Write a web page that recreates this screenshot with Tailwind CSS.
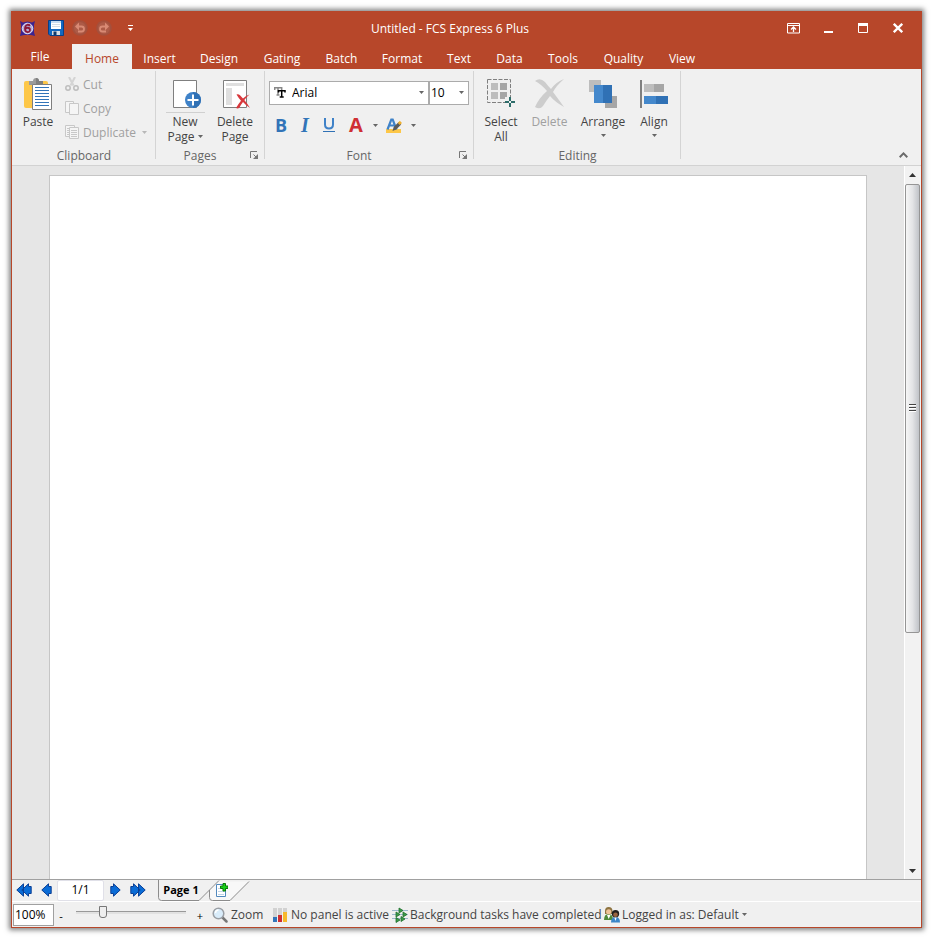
<!DOCTYPE html>
<html lang="en">
<head>
<meta charset="utf-8">
<meta name="viewport" content="width=device-width, initial-scale=1">
<title>Untitled - FCS Express 6 Plus</title>
<script src="https://cdn.jsdelivr.net/npm/@tailwindcss/browser@4"></script>
</head>
<body class="h-screen bg-white px-[11px] pt-[11px] pb-[10px] font-['Open_Sans','Noto_Sans',sans-serif] text-[12px] leading-[15px] text-[#444]">
<svg class="hidden">
  <symbol id="caret" viewBox="0 0 5 3"><path d="M0 0h5L2.500 3z" fill="currentColor"/></symbol>
  <symbol id="launcher" viewBox="0 0 9 9"><path d="M.5 7V.5H7" fill="none" stroke="#777"/><path d="M3.500 3.500 6 6" stroke="#777"/><path d="M8 3v5H3z" fill="#777"/></symbol>
  <symbol id="prev" viewBox="0 0 11 14"><path d="M.8 7 7.500.8V3.500H10.200V10.500H7.500V13.200z" fill="#0a6cd6" stroke="#0b3f94"/></symbol>
</svg>

<div class="flex h-full flex-col border border-[#b7472a] bg-[#f0f0f0] shadow-[0_0_5px_2px_rgba(0,0,0,0.5)]">

  <header class="bg-[#b7472a] text-white">
    <div class="flex h-8 items-center">
      <div class="flex w-32 items-center pl-2">
        <svg class="size-[15px]" viewBox="0 0 15 15"><path d="M0 0 3 1.500 7.500.5 12 1.500 15 0 14 4v7l1 4-4-1H4l-4 1 1-4V4z" fill="#3b2390"/><circle cx="7.500" cy="7.500" r="5.300" fill="#b5add8" stroke="#e4e1f5"/><path d="M10 4.800C8.500 3 5 3.500 5 7.800s5 4 5 1.200-4-3-4.800-.6" fill="none" stroke="#8a1838" stroke-width="1.800"/></svg>
        <button class="ml-[13px]" aria-label="Save"><svg class="block size-4" viewBox="0 0 16 16"><path d="M.5.500h15v15H2L.5 14z" fill="#1368c0" stroke="#0b3f86"/><path d="M3 1h10v8H3z" fill="#fff"/><path d="M3 1h10v2H3z" fill="#c7dcf0"/><path d="M4 4.500h8M4 6.500h8" stroke="#d5dde5"/><path d="M4 11h8v4H4z" fill="#d7dde3"/><path d="M5.500 11.500h3v3.500h-3z" fill="#113a6c"/></svg></button>
        <button class="ml-2" aria-label="Undo"><svg class="block size-4" viewBox="0 0 16 16"><circle cx="8" cy="8" r="7.800" fill="#a5503c"/><circle cx="8" cy="8" r="6" fill="#ad5b47"/><path d="M5 6.500h4.500a2.500 2.500 0 0 1 0 5H6" fill="none" stroke="#d98a74" stroke-width="1.800"/><path d="M7 2.500v8l-4-4z" fill="#d98a74"/></svg></button>
        <button class="ml-2" aria-label="Redo"><svg class="block size-4" viewBox="0 0 16 16"><circle cx="8" cy="8" r="7.800" fill="#a5503c"/><circle cx="8" cy="8" r="6" fill="#ad5b47"/><path d="M11 6.500H6.500a2.500 2.500 0 0 0 0 5H10" fill="none" stroke="#d98a74" stroke-width="1.800"/><path d="M9 2.500v8l4-4z" fill="#d98a74"/></svg></button>
        <button class="ml-4" aria-label="Customize toolbar"><svg class="block h-[6px] w-[5px]" viewBox="0 0 5 6"><path d="M0 0h5v1H0zM0 3h5L2.500 6z" fill="#fff"/></svg></button>
      </div>
      <h1 class="flex-1 text-center">Untitled - FCS Express 6 Plus</h1>
      <div class="flex w-[161px] items-center justify-end pr-[18px]">
        <button aria-label="Ribbon display options"><svg class="block h-[11px] w-[13px]" viewBox="0 0 13 11"><path d="M.5.500h12v9.500H.5zM1 2.500h11" fill="none" stroke="#fff"/><path d="M6.500 9V5M4 6.500 6.500 4 9 6.500" fill="none" stroke="#fff" stroke-width="1.300"/></svg></button>
        <button class="ml-6" aria-label="Minimize"><svg class="block h-[11px] w-[9px]" viewBox="0 0 9 11"><path d="M0 8h9v2H0z" fill="#fff"/></svg></button>
        <button class="ml-[25px]" aria-label="Maximize"><svg class="block size-[10px]" viewBox="0 0 10 10"><path d="M.5.500h9v9h-9z" fill="none" stroke="#fff"/><path d="M0 0h10v3H0z" fill="#fff"/></svg></button>
        <button class="ml-[25px]" aria-label="Close"><svg class="block size-[10px]" viewBox="0 0 10 10"><path d="m.8.800 8.400 8.400m0-8.400L.8 9.200" stroke="#fff" stroke-width="2.300"/></svg></button>
      </div>
    </div>
    <nav class="flex h-[25px]">
      <button class="w-[60px] pr-1">File</button>
      <button class="w-[60px] bg-[#f0f0f0] pt-1 text-[#b7472a]">Home</button>
      <button class="w-[55px] pt-1">Insert</button>
      <button class="w-[64px] pt-1">Design</button>
      <button class="w-[62px] pt-1">Gating</button>
      <button class="w-[57px] pt-1">Batch</button>
      <button class="w-[64px] pt-1">Format</button>
      <button class="w-[50px] pt-1">Text</button>
      <button class="w-[51px] pt-1">Data</button>
      <button class="w-[56px] pt-1">Tools</button>
      <button class="w-[65px] pt-1">Quality</button>
      <button class="w-[52px] pt-1">View</button>
    </nav>
  </header>

  <div class="flex h-[97px] border-b border-[#d2d2d2] pt-[2px]">
    <section class="relative flex w-36 flex-col after:absolute after:top-0 after:right-0 after:bottom-[6px] after:w-px after:bg-[#d4d4d4]" aria-label="Clipboard">
      <div class="flex h-[77px]">
        <button class="ml-[6px] flex w-10 flex-col items-center pt-[7px]">
          <svg class="mb-1 h-8 w-[28px]" viewBox="0 0 28 32"><rect y="3" width="24" height="27" rx="2" fill="#fdc748"/><path d="M5 7V3h4c0-4 6-4 6 0h4v4z" fill="#9a9a9a"/><path d="M12 0v7h7V3h-4c0-2-1-3-3-3z" fill="#7f7f7f"/><path d="M8.500 6.500h19v25h-19z" fill="#fff" stroke="#7f7f7f"/><path d="M11 9.500h14M11 12.500h14M11 15.500h14M11 18.500h14M11 21.500h14M11 24.500h14M11 27.500h14" stroke="#3274b8"/></svg>
          Paste
        </button>
        <div class="ml-[7px] flex flex-col pt-[1px] text-[#a0a0a0]">
          <button class="flex h-6 items-center gap-1" disabled><svg class="size-[14px]" viewBox="0 0 14 14"><path d="M4 0 8.500 8.500M10 0 5.500 8.500" stroke="#d4d4d4" stroke-width="2"/><circle cx="3" cy="11" r="2.200" fill="none" stroke="#bdbdbd" stroke-width="1.500"/><circle cx="11" cy="11" r="2.200" fill="none" stroke="#bdbdbd" stroke-width="1.500"/></svg>Cut</button>
          <button class="flex h-6 items-center gap-1" disabled><svg class="size-[14px]" viewBox="0 0 14 14"><path d="M4 11.500H.5V.500h8V2M4.500 2.500h9v11h-9z" fill="#f5f5f5" stroke="#c8c8c8"/></svg>Copy</button>
          <button class="flex h-6 items-center gap-1" disabled><svg class="size-[14px]" viewBox="0 0 14 14"><path d="M4 11.500H.5V.500h9V2M4.500 2.500h9v11h-9z" fill="#f5f5f5" stroke="#c8c8c8"/><path d="M2 3.500h2M2 5.500h2M2 7.500h2M2 9.500h2M6 5.500h6M6 7.500h6M6 9.500h6M6 11.500h6" stroke="#c8c8c8"/></svg>Duplicate<svg class="ml-[2px] h-[3px] w-[5px] text-[#b8b8b8]"><use href="#caret"/></svg></button>
        </div>
      </div>
      <h2 class="text-center text-[#666]">Clipboard</h2>
    </section>

    <section class="relative flex w-[109px] flex-col after:absolute after:top-0 after:right-0 after:bottom-[6px] after:w-px after:bg-[#d4d4d4]" aria-label="Pages">
      <div class="flex h-[77px] pl-1">
        <button class="flex w-[50px] flex-col items-center pt-[7px]">
          <svg class="ml-[5px] h-8 w-[29px]" viewBox="0 0 29 32"><path d="M.5 2.500h23v27H.5z" fill="#fff" stroke="#7f7f7f"/><circle cx="20" cy="22" r="8" fill="#3f82c8"/><path d="M20 14a8 8 0 0 1 0 16z" fill="#3071b5"/><path d="M14.500 22h11M20 16.500v11" stroke="#fff" stroke-width="2"/></svg>
          <span class="mt-[2px] mb-[1px] h-px w-[39px] bg-[#d0d0d0]"></span>
          <span>New</span>
          <span class="flex items-center gap-[3px]">Page<svg class="h-[3px] w-[5px] text-[#666]"><use href="#caret"/></svg></span>
        </button>
        <button class="flex w-[50px] flex-col items-center pt-[7px]">
          <svg class="mb-1 ml-[5px] h-8 w-[29px]" viewBox="0 0 29 32"><path d="M.5 2.500h23v27H.5z" fill="#fff" stroke="#7f7f7f"/><path d="M3 5h18v3H3zM3 10h6v17H3z" fill="#dfdfdf"/><path d="M13.500 16.500q2-.8 3.500.8l3 3.200q3-3 6.500-4-3 2.500-5.200 5.500 3 3.500 5.700 8-4-2.500-7-6-2 2.500-3.500 5.500-1.500 1.500-3.500.5 2.300-4 5-7.300-2.500-2.700-4.500-6.200z" fill="#d8383c"/></svg>
          <span>Delete</span><span>Page</span>
        </button>
      </div>
      <div class="flex items-center"><h2 class="flex-1 text-center text-[#666]">Pages</h2><button class="w-[21px] pl-[6px]" aria-label="Page options"><svg class="block h-[9px] w-[9px]"><use href="#launcher"/></svg></button></div>
    </section>

    <section class="relative flex w-[209px] flex-col after:absolute after:top-0 after:right-0 after:bottom-[6px] after:w-px after:bg-[#d4d4d4]" aria-label="Font">
      <div class="h-[77px] px-1 pt-[10px]">
        <div class="flex h-6 text-black">
          <div class="relative w-40">
            <select aria-label="Font family" class="block h-6 w-full appearance-none border border-[#ababab] bg-white pb-[2px] pl-[22px]"><option>Arial</option></select>
            <svg class="pointer-events-none absolute top-[6px] left-[5px] h-[11px] w-3" viewBox="0 0 12 11"><path d="M.7 3V.800h7V3M4 1v7M2.500 8h3" fill="none" stroke="#888" stroke-width="1.500"/><path d="M4.500 5.500V3.700h6.500v1.800M7.700 3.500V10M5.700 10h4" fill="none" stroke="#000" stroke-width="1.500"/></svg>
            <svg class="pointer-events-none absolute top-[10px] right-[5px] h-[3px] w-[5px] text-[#666]"><use href="#caret"/></svg>
          </div>
          <div class="relative w-10">
            <select aria-label="Font size" class="block h-6 w-full appearance-none border border-[#ababab] bg-white pb-[2px] pl-[1px]"><option>10</option></select>
            <svg class="pointer-events-none absolute top-[10px] right-[5px] h-[3px] w-[5px] text-[#666]"><use href="#caret"/></svg>
          </div>
        </div>
        <div class="flex h-10 items-center text-[#3274b8]">
          <button class="w-6 text-[18px] leading-6 font-bold">B</button>
          <button class="w-6 font-['Liberation_Serif',serif] text-[20px] leading-6 font-bold italic">I</button>
          <button class="flex w-6 flex-col items-center" aria-label="Underline"><svg class="h-[14px] w-3" viewBox="0 0 12 14"><path d="M2 0v6.500Q2 10.500 6 10.500T10 6.500V0" fill="none" stroke="#3f82c8" stroke-width="2"/><path d="M0 13h12v1H0z" fill="#3071b5"/></svg></button>
          <button class="w-[30px] text-[20px] leading-6 font-bold text-[#cf2f33]">A</button>
          <button class="w-2" aria-label="Font color"><svg class="mx-auto block h-[3px] w-[5px] text-[#666]"><use href="#caret"/></svg></button>
          <button class="ml-[7px]" aria-label="Highlight"><svg class="block h-[15px] w-4" viewBox="0 0 16 15"><path d="M0 11h15v4H0z" fill="#fdc748"/><path d="m1.500 11.500 3.800-10h1.400l3.800 10M3 7.500h6" fill="none" stroke="#3f82c8" stroke-width="2.200"/><path d="m6.500 13 1.200-4 5-5 2.500 2.500-5 5z" fill="#5a5a5a"/><path d="m11.800 5 2-2.200 2.200 2.200-2.200 2z" fill="#f0b030"/></svg></button>
          <button class="ml-[7px] w-2" aria-label="Highlight color"><svg class="mx-auto block h-[3px] w-[5px] text-[#666]"><use href="#caret"/></svg></button>
        </div>
      </div>
      <div class="flex items-center"><h2 class="flex-1 text-center text-[#666]">Font</h2><button class="w-[21px] pl-[6px]" aria-label="Font options"><svg class="block h-[9px] w-[9px]"><use href="#launcher"/></svg></button></div>
    </section>

    <section class="relative flex w-[207px] flex-col after:absolute after:top-0 after:right-0 after:bottom-[6px] after:w-px after:bg-[#d4d4d4]" aria-label="Editing">
      <div class="flex h-[77px] pl-[3px]">
        <button class="flex w-12 flex-col items-center pt-[7px]">
          <svg class="mb-1 h-8 w-[28px]" viewBox="0 0 28 32"><path d="M.5 1.500h23v23H.5z" fill="none" stroke="#7f7f7f" stroke-dasharray="4 1.500"/><path d="M4 5h7v7H4zM4 14h7v7H4z" fill="#bdbdbd"/><path d="M13 5h7v7h-7zM13 14h7v7h-7z" fill="#a6a6a6"/><path d="M18 19h10v10H18z" fill="#f0f0f0"/><path d="M18 24h4M24 24h4M23 19v4M23 25v4" stroke="#2e6d6a" stroke-width="2"/></svg>
          <span>Select</span><span>All</span>
        </button>
        <button class="flex w-[49px] flex-col items-center pt-[7px] text-[#a0a0a0]" disabled>
          <svg class="mb-1 h-8 w-[29px]" viewBox="0 0 29 32"><path d="M0 3Q5-1 10 4q3 4 6 7Q21 4 29 1q-8 7-11 13 6 8 11 15-9-5-14-11-4 5-7 10-3 4-8 1Q4 20 12 13 6 6 0 3z" fill="#cdcdcd"/></svg>
          Delete
        </button>
        <button class="flex w-[58px] flex-col items-center pt-[7px]">
          <svg class="mb-1 h-8 w-[28px]" viewBox="0 0 28 32"><path d="M0 2h12v12H0z" fill="#bdbdbd"/><path d="M16 18h12v12H16z" fill="#a6a6a6"/><path d="M5 7h9v18H5z" fill="#4488cc"/><path d="M14 7h9v18h-9z" fill="#3071b5"/></svg>
          Arrange<svg class="mt-[5px] h-[3px] w-[5px] text-[#666]"><use href="#caret"/></svg>
        </button>
        <button class="flex w-11 flex-col items-center pt-[7px]">
          <svg class="mb-1 h-8 w-[28px]" viewBox="0 0 28 32"><path d="M0 2h2v28H0z" fill="#7f7f7f"/><path d="M4 6h10v8H4z" fill="#bdbdbd"/><path d="M14 6h10v8H14z" fill="#a6a6a6"/><path d="M4 18h12v8H4z" fill="#4488cc"/><path d="M16 18h12v8H16z" fill="#3071b5"/></svg>
          Align<svg class="mt-[5px] h-[3px] w-[5px] text-[#666]"><use href="#caret"/></svg>
        </button>
      </div>
      <h2 class="text-center text-[#666]">Editing</h2>
    </section>
    <button class="mt-auto mr-[13px] mb-[7px] ml-auto" aria-label="Collapse ribbon"><svg class="block h-[6px] w-[9px]" viewBox="0 0 9 6"><path d="m.7 5.200 3.800-3.800 3.800 3.800" fill="none" stroke="#6a6a6a" stroke-width="2"/></svg></button>
  </div>

  <main class="flex min-h-0 flex-1 bg-[#e6e6e6]">
    <div class="flex-1 px-[37px] pt-[9px]"><div class="h-full border border-b-0 border-[#c6c6c6] bg-white"></div></div>
    <div class="flex w-[17px] flex-col border-l border-white bg-[#f2f2f2] pr-[1px]">
      <button class="flex h-[18px] items-center justify-center" aria-label="Scroll up"><svg class="h-1 w-[7px]" viewBox="0 0 7 4"><path d="M0 4h7L3.500 0z" fill="#333"/></svg></button>
      <div class="flex grow-[448] basis-0 items-center justify-center rounded-[2px] border border-[#959595] bg-linear-to-r from-[#f6f6f6] via-[#e3e4e6] to-[#c0c3c8]">
        <svg class="h-2 w-[7px]" viewBox="0 0 7 8"><path d="M0 .500h7M0 3.500h7M0 6.500h7" stroke="#444"/><path d="M0 1.500h7M0 4.500h7M0 7.500h7" stroke="#fff"/></svg>
      </div>
      <div class="grow-[231] basis-0"></div>
      <button class="flex h-4 items-center justify-center" aria-label="Scroll down"><svg class="h-1 w-[7px]" viewBox="0 0 7 4"><path d="M0 0h7L3.500 4z" fill="#333"/></svg></button>
    </div>
  </main>

  <div class="flex h-[23px] border-t border-b border-t-[#a0a0a0] border-b-white text-black">
    <button class="ml-1 flex w-4 items-center pb-[2px]" aria-label="First page"><svg class="h-[14px] w-4" viewBox="0 0 16 14"><path d="M5.800 7 12.500.8V3.500H15.200V10.500H12.500V13.200zM.8 7 7.500.8V13.200z" fill="#0a6cd6" stroke="#0b3f94"/></svg></button>
    <button class="ml-[9px] flex items-center pb-[2px]" aria-label="Previous page"><svg class="h-[14px] w-[11px]"><use href="#prev"/></svg></button>
    <input aria-label="Page number" class="ml-[5px] h-[21px] w-[47px] rounded-[2px] border border-[#e0e0e8] bg-white pb-[2px] text-center" value="1/1">
    <button class="ml-[6px] flex items-center pb-[2px]" aria-label="Next page"><svg class="h-[14px] w-[11px] -scale-x-100"><use href="#prev"/></svg></button>
    <button class="ml-[9px] flex items-center pb-[2px]" aria-label="Last page"><svg class="h-[14px] w-4 -scale-x-100" viewBox="0 0 16 14"><path d="M5.800 7 12.500.8V3.500H15.200V10.500H12.500V13.200zM.8 7 7.500.8V13.200z" fill="#0a6cd6" stroke="#0b3f94"/></svg></button>
    <div class="relative ml-[11px] flex w-24">
      <svg class="absolute inset-0 h-[21px] w-24" viewBox="0 0 96 21"><path d="M52.500 10V18q0 2.500 3 2.500H73L92 1.500H62z" fill="#f8f8f8"/><path d="M1.500 0V17.500q0 3 3 3H42L62 .500M52.500 10V17.500q0 3 3 3H73L92 1.500" fill="none" stroke="#8c8c8c"/></svg>
      <button class="relative ml-[6px] w-9 pb-[2px] text-[11px] font-bold whitespace-nowrap">Page 1</button>
      <button class="relative ml-[17px] self-start pt-[3px]" aria-label="Add page"><svg class="block h-[14px] w-3" viewBox="0 0 12 14"><path d="M.5 1.500h9v12h-9z" fill="#fff" stroke="#5289bd"/><path d="M2 5.500h4M2 8.500h6M2 11.500h6" stroke="#c0d4e6"/><path d="M7 .500h2.500V3H12v2.500H9.500V8H7V5.500H4.500V3H7z" fill="#18d018" stroke="#087808"/></svg></button>
    </div>
  </div>

  <footer class="flex h-[25px] items-center whitespace-nowrap">
    <input aria-label="Zoom level" class="ml-[1px] h-[22px] w-[41px] border border-[#a0a0a0] bg-white pl-[1px] text-black" value="100%">
    <button class="ml-[4px] w-[6px] pt-[2px] text-[11px] text-black" aria-label="Zoom out">-</button>
    <input type="range" aria-label="Zoom" value="23" class="mb-1 ml-3 h-3 w-[110px] appearance-none bg-transparent [&::-webkit-slider-runnable-track]:h-[3px] [&::-webkit-slider-runnable-track]:border-t [&::-webkit-slider-runnable-track]:border-[#999] [&::-webkit-slider-runnable-track]:bg-[#e2e2e2] [&::-webkit-slider-thumb]:-mt-[6px] [&::-webkit-slider-thumb]:h-3 [&::-webkit-slider-thumb]:w-2 [&::-webkit-slider-thumb]:appearance-none [&::-webkit-slider-thumb]:rounded-b-[3px] [&::-webkit-slider-thumb]:border [&::-webkit-slider-thumb]:border-[#777] [&::-webkit-slider-thumb]:bg-[#eee]">
    <button class="ml-[10px] w-2 pt-[2px] text-[11px] text-black" aria-label="Zoom in">+</button>
    <button class="ml-2 flex w-[61px] items-center gap-[3px]"><svg class="size-4 shrink-0" viewBox="0 0 16 16"><path d="m10 10 4.500 4.500" stroke="#777" stroke-width="2.500" stroke-linecap="round"/><circle cx="6.500" cy="6.500" r="5.300" fill="#d9ecfa" stroke="#9a9fa5" stroke-width="1.500"/><path d="M3.500 6a3 3 0 0 1 3-3" fill="none" stroke="#fff" stroke-width="1.500"/></svg>Zoom</button>
    <div class="flex w-[119px] items-center gap-[3px]"><svg class="h-4 w-[15px] shrink-0" viewBox="0 0 15 16"><path d="M0 1h4v9H0zM5 1h4v7H5zM10 1h4v4h-4z" fill="#d2d2d2"/><path d="M0 10h4v5H0z" fill="#3274b8"/><path d="M5 8h4v7H5z" fill="#cf2f33"/><path d="M10 5h4v10h-4z" fill="#f7b92c"/></svg>No panel is active</div>
    <div class="flex w-[212px] items-center gap-[2px]"><svg class="size-4 shrink-0" viewBox="0 0 16 16"><path d="M0 3.500h16M0 7.500h16M0 11.500h16" stroke="#9cb8cc"/><path d="M7 1v5l4-2.500zM4 5v5l4-2.500zM11 5v5l4-2.500zM4 10.500v5l4-2.500zM9 9.500v5l4-2.500z" fill="#3c9a48" stroke="#1d6e2c" stroke-width=".8"/></svg>Background tasks have completed</div>
    <button class="flex items-center gap-[2px]"><svg class="size-4 shrink-0" viewBox="0 0 16 16"><path d="M0 13q0-6 4.500-6T9 13z" fill="#4f8a3c"/><path d="M1 7V4q0-4 3.700-4T8.500 4v3z" fill="#8e7440"/><circle cx="4.700" cy="4.800" r="2.600" fill="#efc39a"/><path d="m3 8 1.700 4L6.500 8z" fill="#fff"/><path d="M7 15.500Q7 10 11.500 10t4.500 5.500z" fill="#3b86c8"/><circle cx="11.500" cy="6.700" r="3.700" fill="#24201e"/><circle cx="11.500" cy="7.800" r="2.300" fill="#9a6440"/><path d="m10.300 10.500 1.200 3.500 1.200-3.500z" fill="#fff"/></svg>Logged in as: Default<svg class="ml-px h-[3px] w-[5px] text-[#666]"><use href="#caret"/></svg></button>
  </footer>
</div>
</body>
</html>
